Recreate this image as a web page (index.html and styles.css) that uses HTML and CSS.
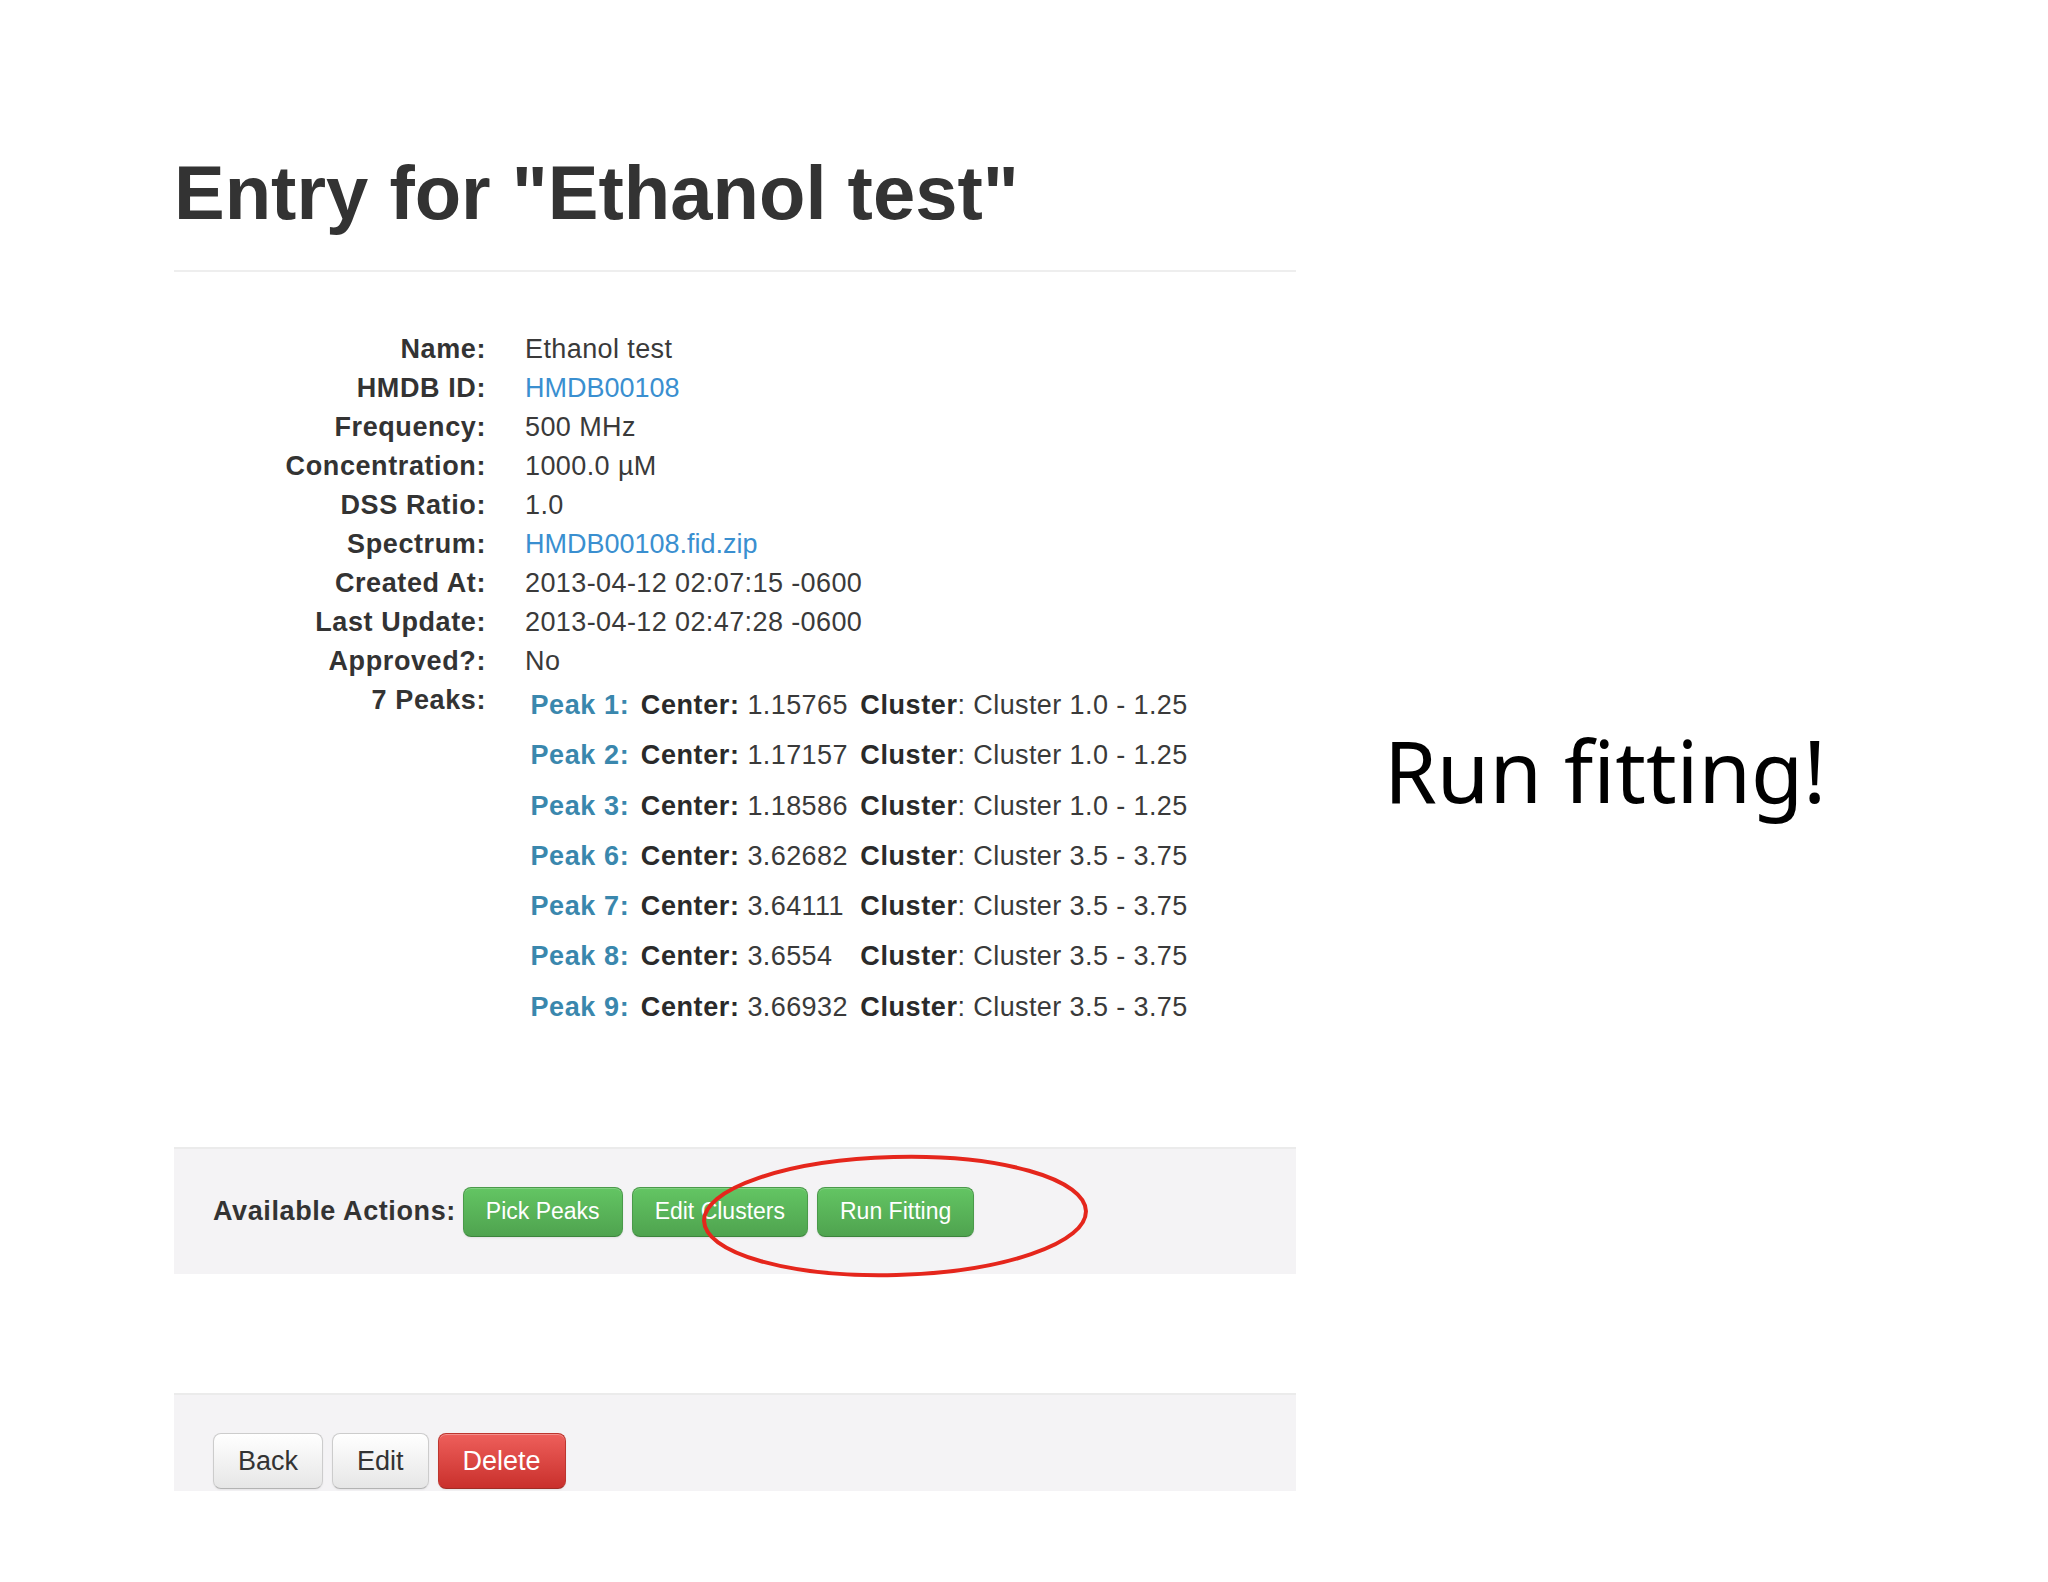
FILE: index.html
```html
<!DOCTYPE html>
<html lang="en">
<head>
<meta charset="utf-8">
<title>Entry for "Ethanol test"</title>
<link rel="stylesheet" href="styles.css">
</head>
<body>
<div class="slide">
  <div class="shot">
    <h1 class="title">Entry for "Ethanol test"</h1>
    <div class="rule"></div>
    <dl class="details">
      <div class="row"><dt>Name:</dt><dd>Ethanol test</dd></div>
      <div class="row"><dt>HMDB ID:</dt><dd><a class="link">HMDB00108</a></dd></div>
      <div class="row"><dt>Frequency:</dt><dd>500 MHz</dd></div>
      <div class="row"><dt>Concentration:</dt><dd>1000.0 µM</dd></div>
      <div class="row"><dt>DSS Ratio:</dt><dd>1.0</dd></div>
      <div class="row"><dt>Spectrum:</dt><dd><a class="link">HMDB00108.fid.zip</a></dd></div>
      <div class="row"><dt>Created At:</dt><dd>2013-04-12 02:07:15 -0600</dd></div>
      <div class="row"><dt>Last Update:</dt><dd>2013-04-12 02:47:28 -0600</dd></div>
      <div class="row"><dt>Approved?:</dt><dd>No</dd></div>
      <div class="row"><dt>7 Peaks:</dt><dd>
        <table class="peaks">
          <tr><td class="pk">Peak 1:</td><td class="ctr"><b>Center:</b> 1.15765</td><td><b>Cluster</b>: Cluster 1.0 - 1.25</td></tr>
          <tr><td class="pk">Peak 2:</td><td class="ctr"><b>Center:</b> 1.17157</td><td><b>Cluster</b>: Cluster 1.0 - 1.25</td></tr>
          <tr><td class="pk">Peak 3:</td><td class="ctr"><b>Center:</b> 1.18586</td><td><b>Cluster</b>: Cluster 1.0 - 1.25</td></tr>
          <tr><td class="pk">Peak 6:</td><td class="ctr"><b>Center:</b> 3.62682</td><td><b>Cluster</b>: Cluster 3.5 - 3.75</td></tr>
          <tr><td class="pk">Peak 7:</td><td class="ctr"><b>Center:</b> 3.64111</td><td><b>Cluster</b>: Cluster 3.5 - 3.75</td></tr>
          <tr><td class="pk">Peak 8:</td><td class="ctr"><b>Center:</b> 3.6554</td><td><b>Cluster</b>: Cluster 3.5 - 3.75</td></tr>
          <tr><td class="pk">Peak 9:</td><td class="ctr"><b>Center:</b> 3.66932</td><td><b>Cluster</b>: Cluster 3.5 - 3.75</td></tr>
        </table>
      </dd></div>
    </dl>
    <div class="actions">
      <span class="actions-label">Available Actions:</span>
      <a class="btn btn-success">Pick Peaks</a>
      <a class="btn btn-success">Edit Clusters</a>
      <a class="btn btn-success">Run Fitting</a>
      <svg class="ring" width="400" height="136" viewBox="0 0 400 136" aria-hidden="true">
        <ellipse cx="199" cy="68" rx="191" ry="59" fill="none" stroke="#e5261c" stroke-width="4" transform="rotate(-1.5 199 68)"/>
      </svg>
    </div>
    <div class="form-actions">
      <a class="btn btn-large">Back</a>
      <a class="btn btn-large">Edit</a>
      <a class="btn btn-large btn-danger">Delete</a>
    </div>
  </div>
  <div class="caption">Run fitting!</div>
</div>
</body>
</html>
```

FILE: styles.css
```css
html, body {
  margin: 0;
  padding: 0;
  background: #ffffff;
}

body {
  width: 2048px;
  height: 1582px;
  overflow: hidden;
  font-family: "Liberation Sans", Arial, sans-serif;
  color: #333333;
}

.slide {
  display: flex;
  align-items: flex-start;
  padding-left: 174px;
}

.shot {
  width: 1122px;
  flex: none;
}

.title {
  margin: 148px 0 0 0;
  font-size: 76px;
  line-height: 90px;
  font-weight: bold;
  color: #333333;
  letter-spacing: 0;
}

.rule {
  margin-top: 32px;
  height: 2px;
  background: #eeeeee;
}

.details {
  margin: 58px 0 0 0;
  font-size: 27px;
  line-height: 39px;
}

.row {
  display: grid;
  grid-template-columns: 312px 1fr;
  column-gap: 39px;
}

.row dt {
  text-align: right;
  font-weight: bold;
  letter-spacing: 0.6px;
  color: #333333;
}

.row dd {
  margin: 0;
  color: #3a3a3a;
  letter-spacing: 0.4px;
}

.link {
  color: #3a8fd0;
  text-decoration: none;
  letter-spacing: 0;
}

.peaks {
  border-collapse: collapse;
  margin-top: -1px;
}

.peaks td {
  padding: 6px 6px 6px 5.5px;
  line-height: 38.3px;
  white-space: nowrap;
  color: #3a3a3a;
  letter-spacing: 0.4px;
}

.peaks .ctr {
  padding-right: 7px;
}

.peaks b {
  font-weight: bold;
  color: #2a2a2a;
  letter-spacing: 0.6px;
}

.peaks .pk {
  font-weight: bold;
  color: #3a87ad;
  letter-spacing: 0.6px;
}

.actions {
  position: relative;
  margin-top: 115px;
  height: 125px;
  border-top: 2px solid #ebebeb;
  background: #f4f3f5;
  display: flex;
  align-items: center;
  padding-left: 39px;
  gap: 9px;
}

.actions-label {
  font-size: 27px;
  font-weight: bold;
  letter-spacing: 0.6px;
  color: #333333;
  margin-right: -2px;
}

.btn {
  display: inline-flex;
  align-items: center;
  justify-content: center;
  box-sizing: border-box;
  border-radius: 8px;
  border: 1px solid #c8c8c8;
  border-bottom-color: #b3b3b3;
  text-decoration: none;
  font-family: "Liberation Sans", Arial, sans-serif;
  white-space: nowrap;
}

.btn-success {
  height: 50px;
  padding: 0 22px;
  font-size: 23px;
  color: #ffffff;
  background: linear-gradient(#63c563, #4fa34f);
  border-color: #4a9a4a #4a9a4a #3c843c;
  box-shadow: inset 0 1px 0 rgba(255,255,255,0.2), 0 1px 2px rgba(0,0,0,0.08);
}

.ring {
  position: absolute;
  left: 522px;
  top: -1px;
  pointer-events: none;
}

.form-actions {
  margin-top: 119px;
  border-top: 2px solid #ebebeb;
  background: #f4f3f5;
  padding: 38px 0 2px 39px;
  display: flex;
  gap: 9px;
}

.btn-large {
  height: 56px;
  padding: 0 24px;
  font-size: 27px;
  color: #333333;
  background: linear-gradient(#ffffff, #e6e6e6);
  border-color: #cccccc #cccccc #b3b3b3;
  box-shadow: inset 0 1px 0 rgba(255,255,255,0.3), 0 1px 2px rgba(0,0,0,0.06);
}

.btn-danger {
  color: #ffffff;
  background: linear-gradient(#ee5f5b, #c9302c);
  border-color: #bd362f #bd362f #a02c25;
}

.caption {
  margin: 720px 0 0 88px;
  font-family: "Noto Sans", "DejaVu Sans", sans-serif;
  font-size: 85px;
  line-height: 100px;
  color: #000000;
  white-space: nowrap;
}
```
